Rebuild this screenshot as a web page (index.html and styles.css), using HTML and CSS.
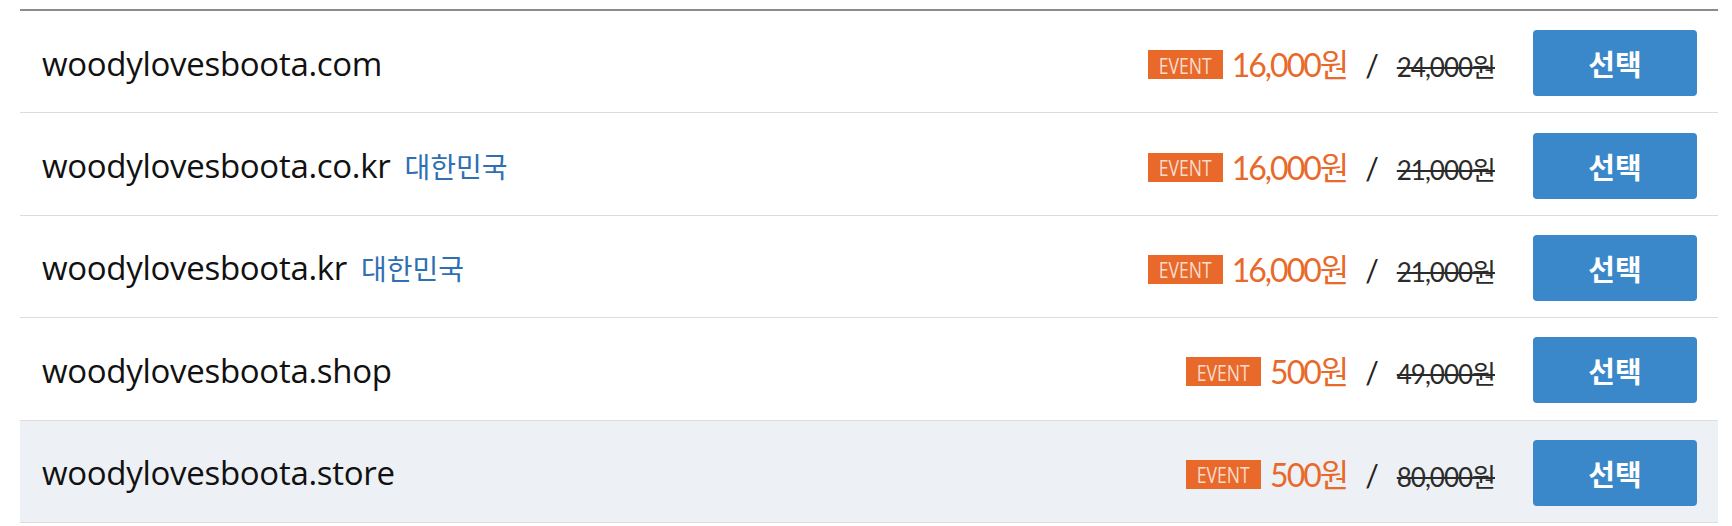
FILE: index.html
```html
<!DOCTYPE html>
<html lang="ko">
<head>
<meta charset="utf-8">
<link rel="stylesheet" href="styles.css">
</head>
<body>
<div class="list">
  <div class="row">
    <div class="domain">woodylovesboota.com</div>
    <div class="price"><span class="badge"><span class="badge-text">EVENT</span></span><span class="sale">16,000원</span><span class="slash">/</span><span class="orig">24,000원</span></div>
    <button class="select">선택</button>
  </div>
  <div class="row">
    <div class="domain">woodylovesboota.co.kr<span class="country">대한민국</span></div>
    <div class="price"><span class="badge"><span class="badge-text">EVENT</span></span><span class="sale">16,000원</span><span class="slash">/</span><span class="orig">21,000원</span></div>
    <button class="select">선택</button>
  </div>
  <div class="row">
    <div class="domain">woodylovesboota.kr<span class="country">대한민국</span></div>
    <div class="price"><span class="badge"><span class="badge-text">EVENT</span></span><span class="sale">16,000원</span><span class="slash">/</span><span class="orig">21,000원</span></div>
    <button class="select">선택</button>
  </div>
  <div class="row">
    <div class="domain">woodylovesboota.shop</div>
    <div class="price"><span class="badge"><span class="badge-text">EVENT</span></span><span class="sale">500원</span><span class="slash">/</span><span class="orig">49,000원</span></div>
    <button class="select">선택</button>
  </div>
  <div class="row hover">
    <div class="domain">woodylovesboota.store</div>
    <div class="price"><span class="badge"><span class="badge-text">EVENT</span></span><span class="sale">500원</span><span class="slash">/</span><span class="orig">80,000원</span></div>
    <button class="select">선택</button>
  </div>
</div>
</body>
</html>
```
FILE: styles.css
```css
html, body {
  margin: 0;
  padding: 0;
  background: #fff;
}
.list {
  margin: 9px 0 0 20px;
  width: 1698px;
  border-top: 2px solid #8c8c8c;
}
.row {
  display: flex;
  align-items: center;
  box-sizing: border-box;
  height: 102.4px;
  padding: 3px 21px 0 22px;
  border-bottom: 1px solid #dcdcdc;
}
.row.hover {
  background: #edf0f5;
}
.domain {
  flex: 1;
  font-family: "Open Sans", "Noto Sans CJK KR", sans-serif;
  font-size: 33px;
  letter-spacing: -0.3px;
  color: #111;
  display: flex;
  align-items: baseline;
}
.country {
  margin-left: 14px;
  font-family: "Noto Sans CJK KR", sans-serif;
  font-size: 28px;
  letter-spacing: 0;
  color: #2f6fb3;
}
.price {
  display: flex;
  align-items: baseline;
  font-family: Lato, "Noto Sans CJK KR", sans-serif;
}
.badge {
  display: flex;
  align-items: center;
  justify-content: center;
  background: #e8692a;
  width: 75px;
  height: 29px;
  align-self: center;
  margin-top: 3px;
}
.badge-text {
  color: #f9dccd;
  font-family: "Open Sans", sans-serif;
  font-size: 22px;
  font-weight: 500;
  line-height: 1;
  display: inline-block;
  transform: scaleX(0.8);
}
.sale {
  margin-left: 9px;
  font-size: 32px;
  color: #e8692a;
  letter-spacing: -2px;
}
.slash {
  margin: 0 18px 0 18px;
  font-size: 30px;
  color: #222;
}
.orig {
  font-size: 26px;
  color: #2b2b2b;
  text-decoration: line-through;
  letter-spacing: -1px;
}
.select {
  margin-left: 38px;
  width: 164px;
  height: 66px;
  border: 0;
  border-radius: 4px;
  background: #3a87c9;
  color: #fff;
  font-family: "Noto Sans CJK KR", sans-serif;
  font-size: 29px;
  font-weight: 700;
  padding: 0;
}
```
